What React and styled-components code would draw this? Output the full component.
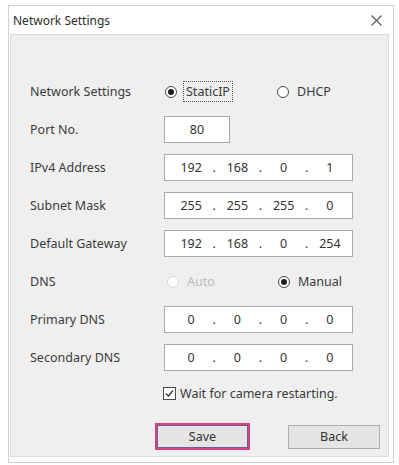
import styled, { createGlobalStyle } from "styled-components";

const Global = createGlobalStyle`
  body {
    margin: 0;
    background: #ffffff;
    font-family: "Noto Sans", "Open Sans", sans-serif;
    font-size: 12.5px;
    color: #3a3a3a;
  }
`;

const Dialog = styled.div`
  box-sizing: border-box;
  margin: 5px 0 0 8px;
  width: 386px;
  height: 458px;
  border: 1px solid #cfcfcf;
  background: #ffffff;
  display: flex;
  flex-direction: column;
`;

const TitleBar = styled.div`
  height: 28px;
  flex: none;
  display: flex;
  align-items: center;
  justify-content: space-between;
  padding: 0 10px 0 4px;
`;

const Title = styled.span`
  font-size: 12px;
  color: #2e2e2e;
`;

const CloseButton = styled.button`
  border: none;
  background: none;
  padding: 0;
  width: 14px;
  height: 14px;
  display: flex;
  align-items: center;
  justify-content: center;
  color: #555;
`;

const Panel = styled.div`
  flex: 1;
  margin: 0 4px 5px 1px;
  border: 1px solid #dadada;
  background: #efefef;
  padding: 43px 0 0 19px;
`;

const Form = styled.div`
  display: grid;
  grid-template-columns: 134px 1fr;
  grid-auto-rows: 27px;
  row-gap: 11px;
  align-items: center;
`;

const Label = styled.span`
  color: #3c3c3c;
`;

const RadioGroup = styled.div`
  display: flex;
  align-items: center;
  padding-left: ${(p) => p.$offset || 1}px;
`;

const RadioOption = styled.label`
  display: flex;
  align-items: center;
  gap: ${(p) => (p.$focused ? 6 : 5)}px;
  width: ${(p) => p.$width || "auto"};
  color: ${(p) => (p.$disabled ? "#bdbdbd" : "#3a3a3a")};
`;

const RadioCircle = styled.span`
  box-sizing: border-box;
  width: 12px;
  height: 12px;
  border-radius: 50%;
  border: 1px solid ${(p) => (p.$disabled ? "#d4d4d4" : "#4a4a4a")};
  background: #ffffff;
  display: flex;
  align-items: center;
  justify-content: center;

  &::after {
    content: "";
    width: 6px;
    height: 6px;
    border-radius: 50%;
    background: ${(p) => (p.$checked ? "#1e1e1e" : "transparent")};
  }
`;

const RadioText = styled.span`
  padding: 1px 2px;
  border: 1px dotted ${(p) => (p.$focused ? "#555" : "transparent")};
`;

const TextBox = styled.div`
  box-sizing: border-box;
  width: ${(p) => p.$width}px;
  height: 27px;
  border: 1px solid #a9a9a9;
  background: #ffffff;
  display: flex;
  align-items: center;
  justify-content: ${(p) => (p.$center ? "center" : "flex-start")};
  padding: ${(p) => (p.$center ? "0" : "0 2px 0 6px")};
  color: #333;
`;

const Octet = styled.span`
  flex: 1;
  text-align: center;
`;

const Dot = styled.span`
  width: 6px;
  text-align: center;
`;

const CheckRow = styled.label`
  display: flex;
  align-items: center;
  gap: 4px;
  margin: 14px 0 0 133px;
  height: 16px;
`;

const CheckBox = styled.span`
  box-sizing: border-box;
  width: 13px;
  height: 13px;
  border: 1px solid #4a4a4a;
  background: #ffffff;
  display: flex;
  align-items: center;
  justify-content: center;
`;

const Buttons = styled.div`
  display: flex;
  align-items: center;
  gap: 38px;
  margin: 22px 0 0 125px;
`;

const Button = styled.button`
  box-sizing: border-box;
  width: ${(p) => (p.$primary ? 95 : 92)}px;
  height: ${(p) => (p.$primary ? 27 : 24)}px;
  font-family: inherit;
  font-size: 12.5px;
  color: #333;
  background: #e4e4e4;
  border: ${(p) => (p.$primary ? "2px solid #d8407f" : "1px solid #adadad")};
  box-shadow: ${(p) => (p.$primary ? "inset 0 0 0 1px #6c5d94" : "none")};
  padding: 0;
`;

function IpBox({ value }) {
  const parts = value.split(".");
  return (
    <TextBox $width={189}>
      {parts.map((p, i) => (
        <>
          <Octet key={"o" + i}>{p}</Octet>
          {i < parts.length - 1 && <Dot key={"d" + i}>.</Dot>}
        </>
      ))}
    </TextBox>
  );
}

function Radio({ label, checked, disabled, focused, width }) {
  return (
    <RadioOption $width={width} $disabled={disabled} $focused={focused}>
      <RadioCircle $checked={checked} $disabled={disabled} />
      <RadioText $focused={focused}>{label}</RadioText>
    </RadioOption>
  );
}

export default function App() {
  return (
    <>
      <Global />
      <Dialog>
        <TitleBar>
          <Title>Network Settings</Title>
          <CloseButton aria-label="Close">
            <svg width="11" height="11" viewBox="0 0 11 11">
              <path d="M0.5 0.5 L10.5 10.5 M10.5 0.5 L0.5 10.5" stroke="#555" strokeWidth="1.1" />
            </svg>
          </CloseButton>
        </TitleBar>
        <Panel>
          <Form>
            <Label>Network Settings</Label>
            <RadioGroup>
              <Radio label="StaticIP" checked focused width="112px" />
              <Radio label="DHCP" />
            </RadioGroup>

            <Label>Port No.</Label>
            <TextBox $width={66} $center>80</TextBox>

            <Label>IPv4 Address</Label>
            <IpBox value="192.168.0.1" />

            <Label>Subnet Mask</Label>
            <IpBox value="255.255.255.0" />

            <Label>Default Gateway</Label>
            <IpBox value="192.168.0.254" />

            <Label>DNS</Label>
            <RadioGroup $offset={3}>
              <Radio label="Auto" disabled width="111px" />
              <Radio label="Manual" checked />
            </RadioGroup>

            <Label>Primary DNS</Label>
            <IpBox value="0.0.0.0" />

            <Label>Secondary DNS</Label>
            <IpBox value="0.0.0.0" />
          </Form>

          <CheckRow>
            <CheckBox>
              <svg width="9" height="9" viewBox="0 0 9 9">
                <path d="M1 4.5 L3.5 7 L8 1.5" fill="none" stroke="#333" strokeWidth="1.2" />
              </svg>
            </CheckBox>
            Wait for camera restarting.
          </CheckRow>

          <Buttons>
            <Button $primary>Save</Button>
            <Button>Back</Button>
          </Buttons>
        </Panel>
      </Dialog>
    </>
  );
}
